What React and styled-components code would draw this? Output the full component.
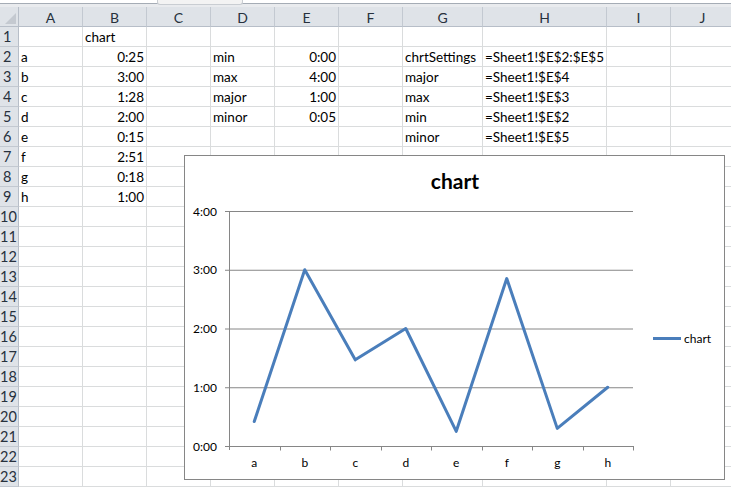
import React from 'react';
import styled, { createGlobalStyle } from 'styled-components';

const Global = createGlobalStyle`
  html, body { margin: 0; padding: 0; background: #fff; overflow: hidden; }
  body { font-family: Lato, "Liberation Sans", sans-serif; }
`;

const COLS = [
  ['A', 64], ['B', 64], ['C', 64], ['D', 64], ['E', 64],
  ['F', 64], ['G', 80], ['H', 124], ['I', 64], ['J', 64],
];

const DATA = {
  1: { B: 'chart' },
  2: { A: 'a', B: '0:25', D: 'min', E: '0:00', G: 'chrtSettings', H: '=Sheet1!$E$2:$E$5' },
  3: { A: 'b', B: '3:00', D: 'max', E: '4:00', G: 'major', H: '=Sheet1!$E$4' },
  4: { A: 'c', B: '1:28', D: 'major', E: '1:00', G: 'max', H: '=Sheet1!$E$3' },
  5: { A: 'd', B: '2:00', D: 'minor', E: '0:05', G: 'min', H: '=Sheet1!$E$2' },
  6: { A: 'e', B: '0:15', G: 'minor', H: '=Sheet1!$E$5' },
  7: { A: 'f', B: '2:51' },
  8: { A: 'g', B: '0:18' },
  9: { A: 'h', B: '1:00' },
};
const RIGHT = (v) => /^\d+:\d\d$/.test(v);

const Page = styled.div`
  position: relative;
  width: 731px;
  height: 487px;
  overflow: hidden;
  background: #fff;
`;

const TopStrip = styled.div`
  height: 7px;
  box-sizing: border-box;
  border-top: 3px solid #fff;
  background: #e9ebee;
  position: relative;
  &::before {
    content: '';
    position: absolute;
    left: 0; right: 0; top: 0;
    height: 1px;
    background: #a5acb5;
  }
`;

const FormulaTab = styled.div`
  position: absolute;
  left: 157px;
  top: -3px;
  width: 84px;
  height: 4px;
  background: #f3f3f3;
  border: 1px solid #c9cdd2;
  border-top: none;
  border-radius: 0 0 3px 3px;
`;

const Sheet = styled.div`
  display: grid;
  grid-template-columns: 19px ${COLS.map((c) => c[1] + 'px').join(' ')};
  grid-auto-rows: 20px;
  width: 735px;
`;

const Corner = styled.div`
  background: #dfe3e8;
  border-right: 1px solid #b7bec8;
  border-bottom: 1px solid #b7bec8;
  box-sizing: border-box;
  display: flex;
  align-items: flex-end;
  justify-content: flex-end;
  padding: 0 2px 2px 0;
`;

const ColHead = styled.div`
  background: #dfe3e8;
  border-right: 1px solid #c3c9d1;
  border-bottom: 1px solid #b7bec8;
  box-sizing: border-box;
  display: flex;
  align-items: center;
  justify-content: center;
  font-size: 14px;
  color: #27313d;
  padding-top: 1px;
`;

const RowHead = styled.div`
  background: #dfe3e8;
  border-right: 1px solid #b7bec8;
  border-bottom: 1px solid #c3c9d1;
  box-sizing: border-box;
  display: flex;
  align-items: flex-end;
  padding-left: ${(p) => (p.$wide ? '0px' : '3px')};
  padding-bottom: 1px;
  font-size: 14.5px;
  color: #27313d;
  overflow: hidden;
  white-space: nowrap;
`;

const Cell = styled.div`
  border-right: 1px solid #dadcdd;
  border-bottom: 1px solid #dadcdd;
  box-sizing: border-box;
  display: flex;
  align-items: flex-end;
  justify-content: ${(p) => (p.$right ? 'flex-end' : 'flex-start')};
  padding: 0 2px 1px 2px;
  font-size: 13.5px;
  color: #000;
  white-space: nowrap;
  overflow: visible;
`;

const ChartFrame = styled.div`
  position: absolute;
  left: 184px;
  top: 155px;
  width: 541px;
  height: 325px;
  box-sizing: border-box;
  border: 1px solid #868686;
  background: #fff;
`;

const CATS = ['a', 'b', 'c', 'd', 'e', 'f', 'g', 'h'];
const VALS = [25, 180, 88, 120, 15, 171, 18, 60];

function Chart() {
  const x0 = 44, x1 = 448, yBot = 290, yTop = 55;
  const step = (x1 - x0) / 8;
  const ph = yBot - yTop;
  const grid = [0, 1, 2, 3, 4].map((i) => yBot - (ph * i) / 4);
  const pts = VALS.map((v, i) => [x0 + step * (i + 0.5), yBot - (v / 240) * ph]);
  return (
    <ChartFrame>
      <svg width="539" height="323" viewBox="0 0 539 323" style={{ display: 'block' }}>
        <text x="270" y="33" textAnchor="middle" fontFamily="Lato, sans-serif" fontWeight="700" fontSize="21" fill="#000">chart</text>
        {grid.map((y, i) => (
          <g key={i}>
            <line x1={x0 - 4} y1={y + 0.5} x2={x1} y2={y + 0.5} stroke="#868686" strokeWidth="1" />
            <text x="32" y={y + 4.5} textAnchor="end" fontFamily="Lato, sans-serif" fontSize="12" fill="#000">{`${i}:00`}</text>
          </g>
        ))}
        <line x1={x0 + 0.5} y1={yTop} x2={x0 + 0.5} y2={yBot + 4} stroke="#868686" strokeWidth="1" />
        {CATS.map((c, i) => (
          <g key={c}>
            <line x1={Math.round(x0 + step * (i + 1)) + 0.5} y1={yBot} x2={Math.round(x0 + step * (i + 1)) + 0.5} y2={yBot + 4.5} stroke="#868686" strokeWidth="1" />
            <text x={x0 + step * (i + 0.5)} y="311" textAnchor="middle" fontFamily="Lato, sans-serif" fontSize="12" fill="#000">{c}</text>
          </g>
        ))}
        <polyline points={pts.map((p) => p.join(',')).join(' ')} fill="none" stroke="#4a7ebb" strokeWidth="3" strokeLinejoin="round" strokeLinecap="round" />
        <line x1="468" y1="182.5" x2="496" y2="182.5" stroke="#4a7ebb" strokeWidth="3" />
        <text x="499" y="186.5" fontFamily="Lato, sans-serif" fontSize="12" fill="#000">chart</text>
      </svg>
    </ChartFrame>
  );
}

export default function App() {
  const rows = [];
  for (let r = 1; r <= 23; r++) {
    rows.push(<RowHead key={`rh${r}`} $wide={r >= 10}>{r}</RowHead>);
    COLS.forEach(([c]) => {
      const v = (DATA[r] && DATA[r][c]) || '';
      rows.push(<Cell key={`${c}${r}`} $right={RIGHT(v)}>{v}</Cell>);
    });
  }
  return (
    <Page>
      <Global />
      <TopStrip>
        <FormulaTab />
      </TopStrip>
      <Sheet>
        <Corner>
          <svg width="11" height="11" viewBox="0 0 11 11">
            <polygon points="11,0 11,11 0,11" fill="#c4c9d0" />
          </svg>
        </Corner>
        {COLS.map(([c]) => (
          <ColHead key={c}>{c}</ColHead>
        ))}
        {rows}
      </Sheet>
      <Chart />
    </Page>
  );
}
